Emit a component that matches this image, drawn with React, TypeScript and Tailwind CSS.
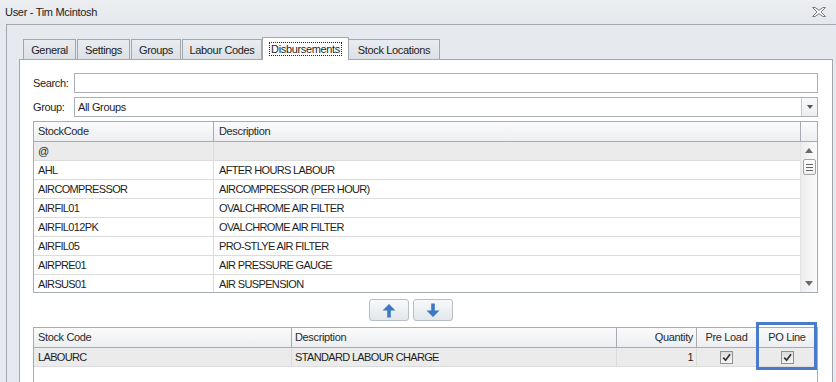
import React from "react";

const rows: [string, string][] = [
  ["@", ""],
  ["AHL", "AFTER HOURS LABOUR"],
  ["AIRCOMPRESSOR", "AIRCOMPRESSOR (PER HOUR)"],
  ["AIRFIL01", "OVALCHROME AIR FILTER"],
  ["AIRFIL012PK", "OVALCHROME AIR FILTER"],
  ["AIRFIL05", "PRO-STLYE AIR FILTER"],
  ["AIRPRE01", "AIR PRESSURE GAUGE"],
  ["AIRSUS01", "AIR SUSPENSION"],
];

function Tab({ label, w, active }: { label: string; w: string; active?: boolean }) {
  if (active) {
    return (
      <div
        className={`${w} h-[23px] mb-[-1px] relative z-10 bg-white border border-b-0 border-[#a3a8af] flex items-start justify-center pt-[4px]`}
      >
        <span className="border border-dotted border-[#222] px-[1px] leading-[12px]">{label}</span>
      </div>
    );
  }
  return (
    <div
      className={`${w} h-[20px] mr-[1px] border border-b-0 border-[#a3a8af] bg-linear-to-b from-[#e9ecf0] to-[#dde1e6] flex items-center justify-center pt-[1px] text-[#222]`}
    >
      {label}
    </div>
  );
}

function Check() {
  return (
    <div className="w-[13px] h-[13px] border border-[#8e9093] bg-linear-to-b from-[#dcdcdc] to-[#f6f6f6] flex items-center justify-center">
      <svg width="11" height="11" viewBox="0 0 11 11">
        <path d="M2.2 5.6 L4.6 8.2 L9 2.2" fill="none" stroke="#333" strokeWidth="1.7" />
      </svg>
    </div>
  );
}

function ArrowUp() {
  return (
    <svg width="14" height="15" viewBox="0 0 14 15">
      <polygon points="7,1 13.5,7.5 8.8,7.5 8.8,14.5 5.2,14.5 5.2,7.5 0.5,7.5" fill="#3b79c4" />
    </svg>
  );
}

function ArrowDown() {
  return (
    <svg width="14" height="15" viewBox="0 0 14 15">
      <polygon points="7,14 13.5,7.5 8.8,7.5 8.8,0.5 5.2,0.5 5.2,7.5 0.5,7.5" fill="#3b79c4" />
    </svg>
  );
}

export default function App() {
  return (
    <div className="w-[836px] h-[382px] overflow-hidden bg-[#e6e9ed] font-['Liberation_Sans',Arial,sans-serif] text-[11px] tracking-[-0.35px] text-[#1e1e1e] flex flex-col">
      {/* title bar */}
      <div className="h-[24px] shrink-0 flex items-center justify-between pl-[5px] pr-[10px] bg-linear-to-b from-[#eceef1] to-[#e5e8ec]">
        <span className="tracking-[-0.3px] text-[#222]">User - Tim Mcintosh</span>
        <svg width="14" height="10" viewBox="0 0 14 10">
          <polygon
            points="0.5,0.5 3.2,0.5 7,3.4 10.8,0.5 13.5,0.5 9,5 13.5,9.5 10.8,9.5 7,6.6 3.2,9.5 0.5,9.5 5,5"
            fill="#f7f7f7"
            stroke="#7a7a7a"
            strokeWidth="1"
          />
        </svg>
      </div>

      {/* frame */}
      <div className="flex-1 min-h-0 ml-[6px] border-l border-t border-[#a3a8af] pt-[12px] pl-[12px] flex flex-col">
        {/* tabs */}
        <div className="flex items-end h-[22px] pl-[4px] shrink-0">
          <Tab label="General" w="w-[53px]" />
          <Tab label="Settings" w="w-[53px]" />
          <Tab label="Groups" w="w-[50px]" />
          <div className="w-[80px] h-[20px] border border-b-0 border-[#a3a8af] bg-linear-to-b from-[#e9ecf0] to-[#dde1e6] flex items-center justify-center pt-[1px] text-[#222]">
            Labour Codes
          </div>
          <Tab label="Disbursements" w="w-[87px]" active />
          <div className="w-[91px] h-[20px] border border-b-0 border-l-0 border-[#a3a8af] bg-linear-to-b from-[#e9ecf0] to-[#dde1e6] flex items-center justify-center pt-[1px] text-[#222]">
            Stock Locations
          </div>
        </div>

        {/* panel */}
        <div className="flex-1 min-h-0 w-[814px] border border-b-0 border-[#a3a8af] bg-white pl-[13px] pr-[14px] pt-[13px] flex flex-col">
          {/* search */}
          <div className="flex items-center h-[20px] shrink-0">
            <span className="w-[41px]">Search:</span>
            <div className="flex-1 h-full border border-[#abb0b8] bg-white" />
          </div>
          {/* group */}
          <div className="flex items-center h-[20px] mt-[4px] shrink-0">
            <span className="w-[41px]">Group:</span>
            <div className="flex-1 h-full border border-[#abb0b8] bg-white flex items-center">
              <span className="flex-1 pl-[3px]">All Groups</span>
              <div className="w-[16px] h-full border-l border-[#c6cad0] bg-linear-to-b from-[#f8f9fa] to-[#eceef1] flex items-center justify-center">
                <div className="w-0 h-0 border-l-[3.5px] border-r-[3.5px] border-t-[4px] border-l-transparent border-r-transparent border-t-[#555]" />
              </div>
            </div>
          </div>

          {/* grid 1 */}
          <div className="mt-[4px] h-[172px] shrink-0 border border-[#a5acb5] flex flex-col overflow-hidden">
            <div className="flex h-[20px] shrink-0 border-b border-[#a5acb5] bg-linear-to-b from-[#fbfbfc] to-[#eceef1] text-[#2a2a2a]">
              <div className="w-[180px] border-r border-[#a5acb5] pl-[4px] flex items-center">StockCode</div>
              <div className="flex-1 border-r border-[#a5acb5] pl-[5px] flex items-center">Description</div>
              <div className="w-[16px]" />
            </div>
            <div className="flex flex-1 min-h-0">
              <div className="flex-1 flex flex-col overflow-hidden">
                {rows.map(([c, d], i) => (
                  <div
                    key={c}
                    className={`flex h-[19px] shrink-0 border-b border-[#dcdcdc] tracking-[-0.65px] ${
                      i === 0 ? "bg-[#ebebeb]" : "bg-white"
                    }`}
                  >
                    <div className="w-[180px] border-r border-[#dcdcdc] pl-[4px] flex items-center">{c}</div>
                    <div className="flex-1 pl-[5px] flex items-center">{d}</div>
                  </div>
                ))}
              </div>
              <div className="w-[17px] border-l border-[#e4e4e4] bg-linear-to-r from-[#ededed] to-[#fbfbfb] flex flex-col items-center">
                <div className="mt-[6px] w-0 h-0 border-l-[4.5px] border-r-[4.5px] border-b-[5px] border-l-transparent border-r-transparent border-b-[#6a6a6a]" />
                <div className="mt-[6px] w-[13px] h-[16px] rounded-[2px] border border-[#a4a4a4] bg-linear-to-b from-white to-[#f0f0f0] flex flex-col items-center justify-center gap-[2px]">
                  <div className="w-[7px] h-px bg-[#666]" />
                  <div className="w-[7px] h-px bg-[#666]" />
                  <div className="w-[7px] h-px bg-[#666]" />
                </div>
                <div className="flex-1" />
                <div className="mb-[6px] w-0 h-0 border-l-[4.5px] border-r-[4.5px] border-t-[5px] border-l-transparent border-r-transparent border-t-[#6a6a6a]" />
              </div>
            </div>
          </div>

          {/* move buttons */}
          <div className="mt-[6px] shrink-0 flex justify-center pr-[30px] gap-[4px]">
            <div className="w-[40px] h-[22px] rounded-[3px] border border-[#b9bfc7] bg-linear-to-b from-[#f8f9fb] to-[#e3e6ea] flex items-center justify-center">
              <ArrowUp />
            </div>
            <div className="w-[40px] h-[22px] rounded-[3px] border border-[#b9bfc7] bg-linear-to-b from-[#f8f9fb] to-[#e3e6ea] flex items-center justify-center">
              <ArrowDown />
            </div>
          </div>

          {/* grid 2 */}
          <div className="mt-[6px] flex-1 min-h-0 border border-b-0 border-[#a5acb5] flex flex-col relative">
            <div className="flex h-[20px] shrink-0 border-b border-[#a5acb5] bg-linear-to-b from-[#fbfbfc] to-[#eceef1] text-[#2a2a2a]">
              <div className="w-[258px] border-r border-[#a5acb5] pl-[4px] flex items-center">Stock Code</div>
              <div className="w-[325px] border-r border-[#a5acb5] pl-[3px] flex items-center">Description</div>
              <div className="w-[80px] border-r border-[#a5acb5] pr-[3px] flex items-center justify-end">Quantity</div>
              <div className="w-[60px] border-r border-[#a5acb5] flex items-center justify-center">Pre Load</div>
              <div className="flex-1 flex items-center justify-center">PO Line</div>
            </div>
            <div className="flex h-[19px] shrink-0 border-b border-[#dcdcdc] bg-[#ebebeb] tracking-[-0.65px]">
              <div className="w-[258px] border-r border-[#dcdcdc] pl-[4px] flex items-center">LABOURC</div>
              <div className="w-[325px] border-r border-[#dcdcdc] pl-[3px] flex items-center">STANDARD LABOUR CHARGE</div>
              <div className="w-[80px] border-r border-[#dcdcdc] pr-[3px] flex items-center justify-end">1</div>
              <div className="w-[60px] border-r border-[#dcdcdc] flex items-center justify-center">
                <Check />
              </div>
              <div className="flex-1 flex items-center justify-center">
                <Check />
              </div>
            </div>
            {/* highlight annotation */}
            <div className="absolute left-[722px] top-[-6px] w-[61px] h-[48px] border-[3px] border-[#4a7bca] pointer-events-none" />
          </div>
        </div>
      </div>
    </div>
  );
}
